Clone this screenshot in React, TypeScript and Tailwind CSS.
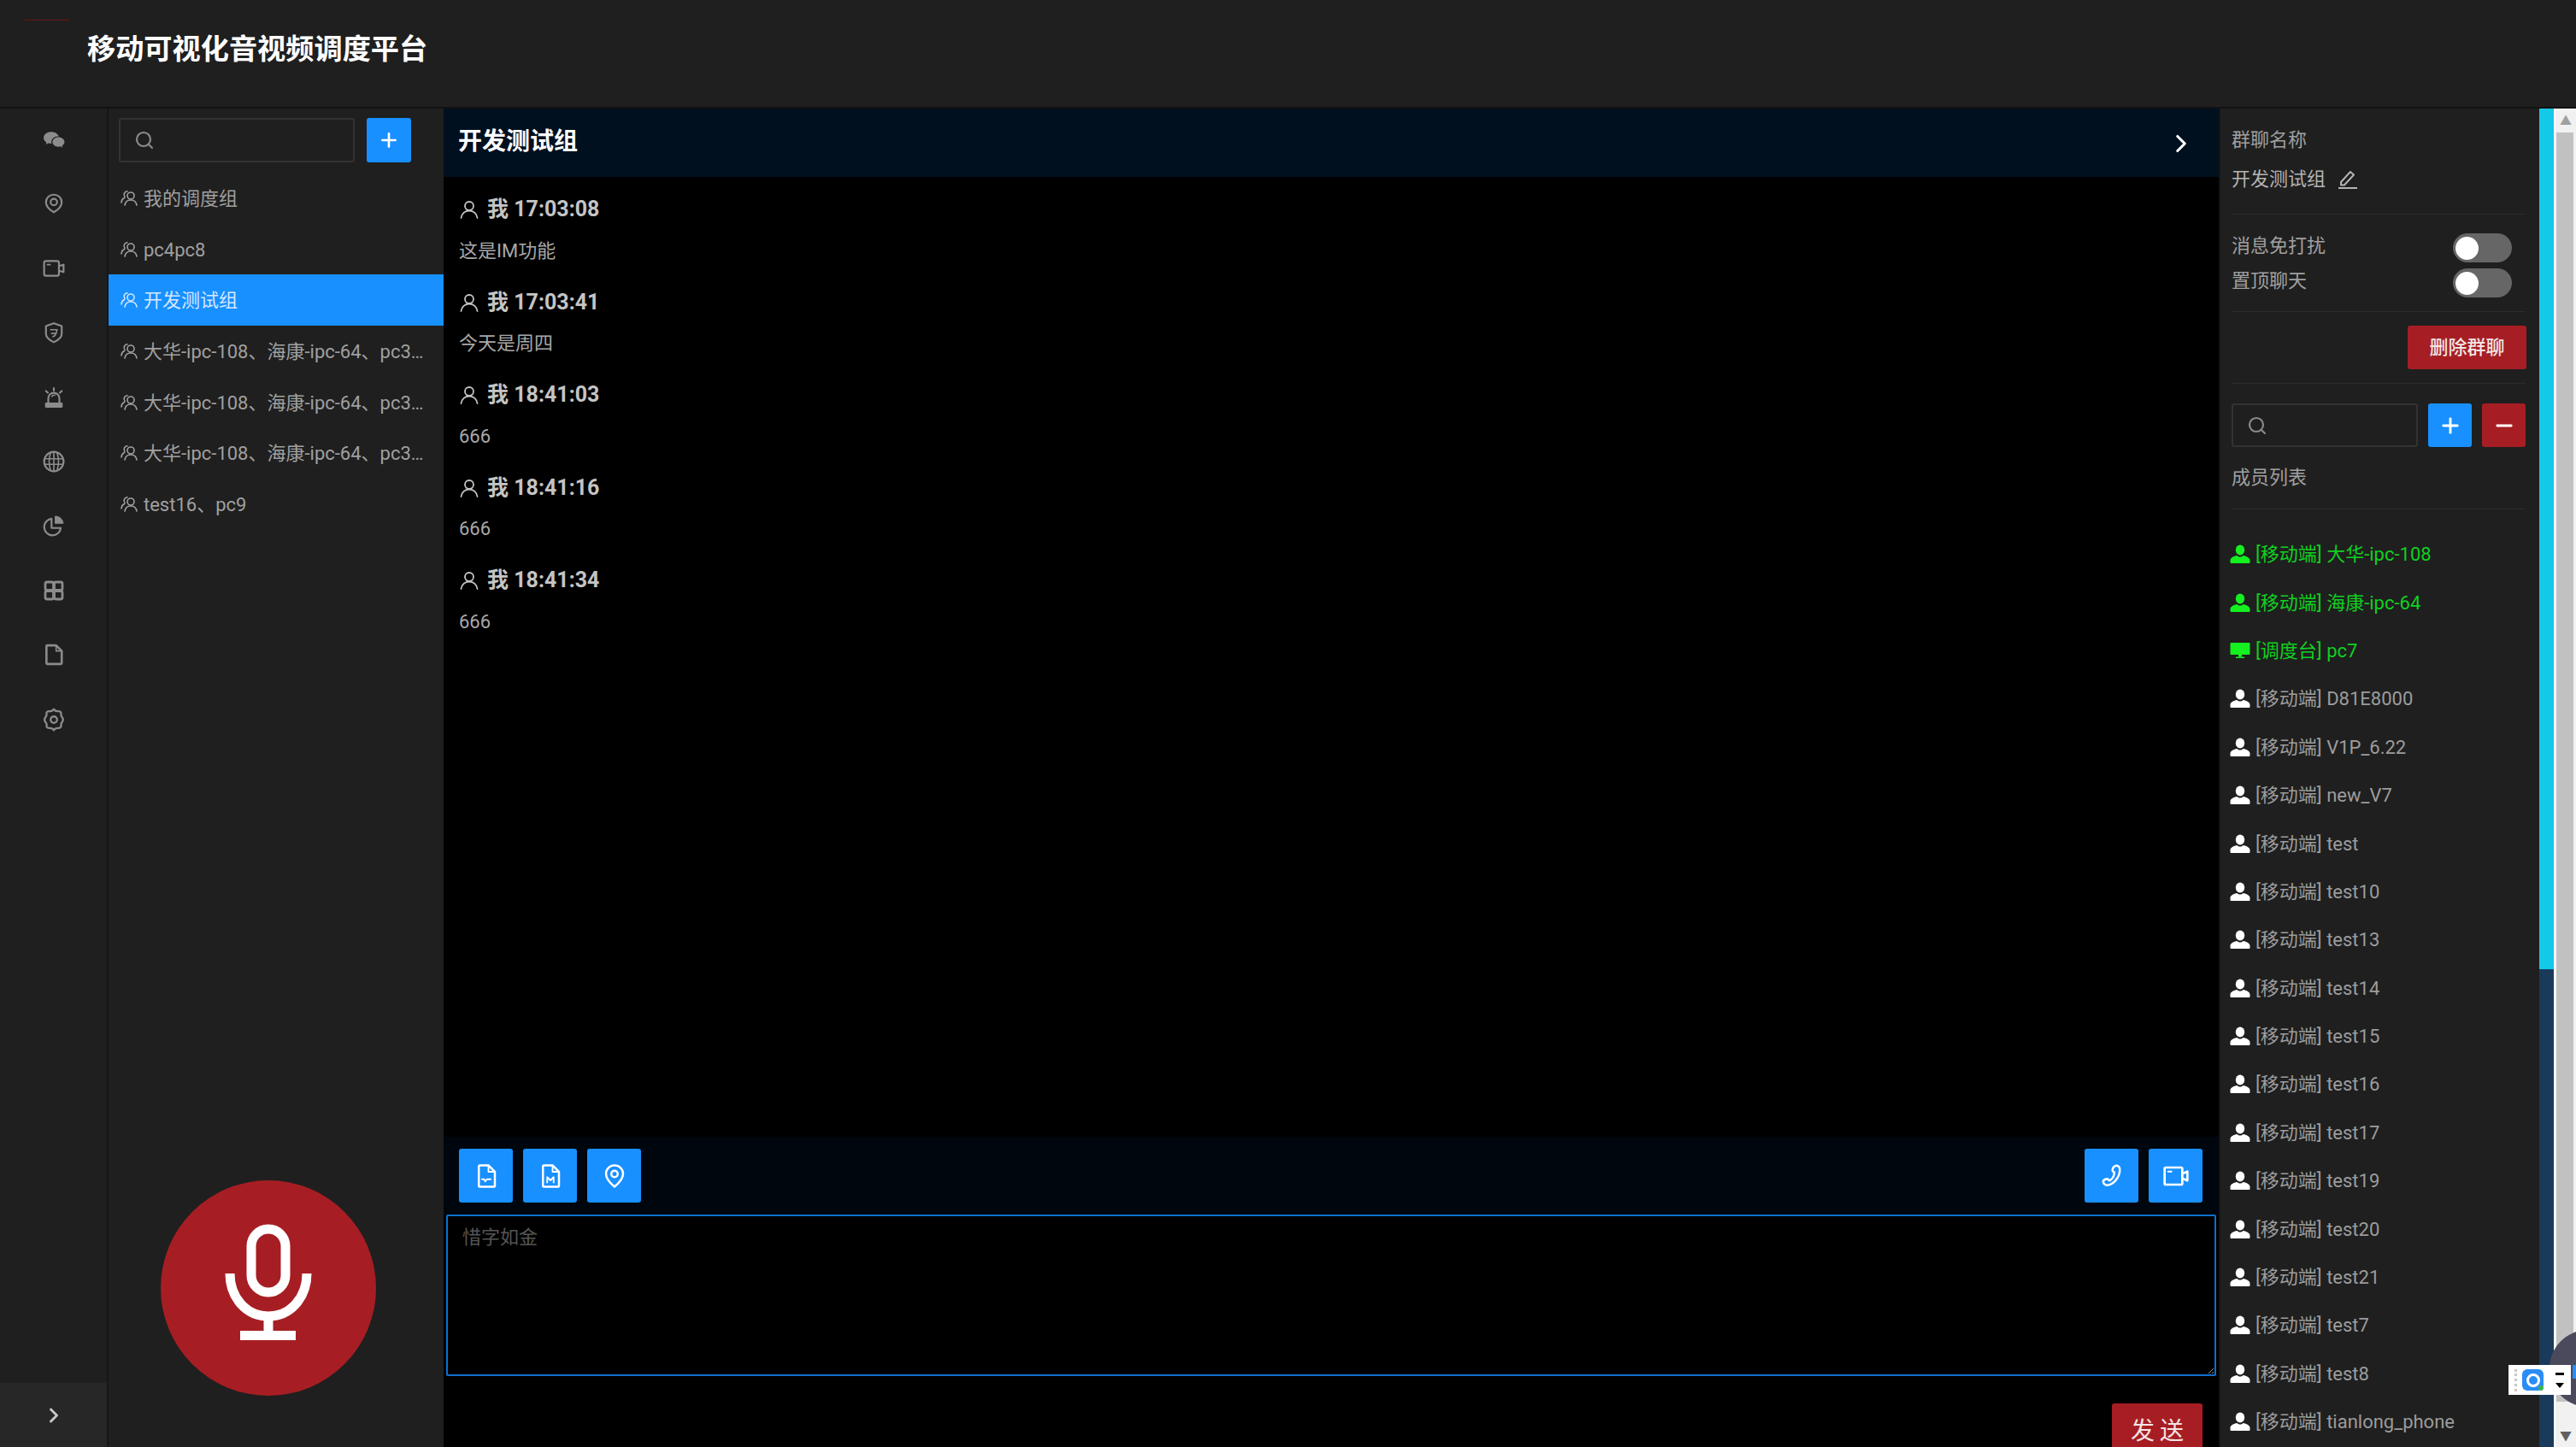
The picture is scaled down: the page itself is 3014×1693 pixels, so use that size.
import { ChevronRight, Minus, Plus, Search } from "lucide-react";

const groups = [
  "我的调度组",
  "pc4pc8",
  "开发测试组",
  "大华-ipc-108、海康-ipc-64、pc3、pc4、pc7",
  "大华-ipc-108、海康-ipc-64、pc3、pc5、pc8",
  "大华-ipc-108、海康-ipc-64、pc3、pc6、pc9",
  "test16、pc9",
];

const messages = [
  { time: "17:03:08", text: "这是IM功能" },
  { time: "17:03:41", text: "今天是周四" },
  { time: "18:41:03", text: "666" },
  { time: "18:41:16", text: "666" },
  { time: "18:41:34", text: "666" },
];

const members = [
  { tag: "移动端", name: "大华-ipc-108", online: true },
  { tag: "移动端", name: "海康-ipc-64", online: true },
  { tag: "调度台", name: "pc7", online: true, desk: true },
  { tag: "移动端", name: "D81E8000" },
  { tag: "移动端", name: "V1P_6.22" },
  { tag: "移动端", name: "new_V7" },
  { tag: "移动端", name: "test" },
  { tag: "移动端", name: "test10" },
  { tag: "移动端", name: "test13" },
  { tag: "移动端", name: "test14" },
  { tag: "移动端", name: "test15" },
  { tag: "移动端", name: "test16" },
  { tag: "移动端", name: "test17" },
  { tag: "移动端", name: "test19" },
  { tag: "移动端", name: "test20" },
  { tag: "移动端", name: "test21" },
  { tag: "移动端", name: "test7" },
  { tag: "移动端", name: "test8" },
  { tag: "移动端", name: "tianlong_phone" },
];

function Svg({ size = 26, children }: { size?: number; children: React.ReactNode }) {
  return (
    <svg width={size} height={size} viewBox="0 0 24 24" fill="none" stroke="currentColor" strokeWidth="2" strokeLinecap="round" strokeLinejoin="round">
      {children}
    </svg>
  );
}

const railIcons = [
  <Svg key="chat">
    <path fill="currentColor" stroke="none" d="M9 4c-4.400 0-8 2.800-8 6.300 0 2 1.200 3.700 3 4.900L3.300 17.600l2.800-1.400c.9.3 1.900.4 2.900.4h.6a5 5 0 0 1-.3-1.700c0-3.500 3.300-6.200 7.400-6.200h.6C16.300 6 13 4 9 4z" />
    <path fill="currentColor" stroke="none" d="M23.500 14.800c0-2.900-2.900-5.200-6.500-5.200s-6.500 2.300-6.500 5.200S13.400 20 17 20c.8 0 1.500-.1 2.200-.3l2.300 1.200-.6-2c1.600-1 2.600-2.500 2.600-4.100z" />
  </Svg>,
  <Svg key="pin">
    <path d="M12 2.500c-4.700 0-8.500 3.500-8.500 8 0 5 5 9 8.500 11 3.500-2 8.500-6 8.500-11 0-4.500-3.800-8-8.500-8z" />
    <circle cx="12" cy="10.500" r="3.500" />
  </Svg>,
  <Svg key="video">
    <rect x="1.500" y="4" width="16" height="16" rx="2" />
    <path d="M17.500 9.500 22.500 8v8l-5-1.500" />
    <path d="M5 8h3" strokeWidth="1.500" />
  </Svg>,
  <Svg key="shield">
    <path d="M12 2 3.500 5v8.500C3.500 17.500 8 20.500 12 22.500c4-2 8.500-5 8.500-9V5z" />
    <path d="M8.500 9h7l-1 4h-5M14 13c0 2-1 3-3 3.500" strokeWidth="1.500" />
  </Svg>,
  <Svg key="alarm">
    <path d="M6 18v-5a6 6 0 0 1 12 0v5" />
    <path fill="currentColor" d="M3.500 18.500h17V22h-17z" />
    <path d="M12 2v2.500M3.500 5l2 2M20.500 5l-2 2" />
    <path d="M10 11a3 3 0 0 1 3-1.500" strokeWidth="1.500" />
  </Svg>,
  <Svg key="globe">
    <circle cx="12" cy="12" r="10.500" />
    <path d="M8.500 2.500c-2 6-2 13 0 19M15.500 2.500c2 6 2 13 0 19M12 1.500v21M2 9h20M2 15h20" strokeWidth="1.500" />
  </Svg>,
  <Svg key="pie">
    <path d="M19.500 14.500A9 9 0 1 1 9.500 4.500V14.500z" />
    <path fill="currentColor" d="M13.500 2v7.500H22A8.500 8.500 0 0 0 13.500 2z" strokeWidth="1" />
  </Svg>,
  <Svg key="apps" size={24}>
    <rect x="2" y="2" width="9.500" height="9.500" rx="2" strokeWidth="2.800" />
    <rect x="12.500" y="2" width="9.500" height="9.500" rx="2" strokeWidth="2.800" />
    <rect x="2" y="12.500" width="9.500" height="9.500" rx="2" strokeWidth="2.800" />
    <rect x="12.500" y="12.500" width="9.500" height="9.500" rx="2" strokeWidth="2.800" />
  </Svg>,
  <Svg key="file">
    <path d="M4 3a1 1 0 0 1 1-1h9.500L20.500 8v13a1 1 0 0 1-1 1H5a1 1 0 0 1-1-1z" strokeWidth="2.400" />
    <path d="M14.500 2v6h6" strokeWidth="1.500" />
  </Svg>,
  <Svg key="gear" size={28}>
    <path d="M12 1.500c1 1.500 2 2 3.500 2.100 1.600 0 2.900-.3 3.500.9.700 1.200-.2 2.200.4 3.500.6 1.400 1.900 2.600 1.900 4s-1.300 2.600-1.900 4c-.6 1.300.3 2.300-.4 3.500-.6 1.200-1.900.9-3.500.9-1.500.1-2.500.6-3.500 2.100-1-1.500-2-2-3.500-2.100-1.600 0-2.900.3-3.500-.9-.7-1.200.2-2.200-.4-3.500C3.900 14.600 2.600 13.400 2.600 12s1.300-2.600 1.900-4c.6-1.300-.3-2.300.4-3.500.6-1.200 1.900-.9 3.500-.9 1.500-.1 2.500-.6 3.600-2.100z" />
    <circle cx="12" cy="12" r="3.200" />
  </Svg>,
];

function GroupIcon() {
  return (
    <svg width="20" height="20" viewBox="0 0 20 20" fill="none" stroke="currentColor" strokeWidth="1.600" strokeLinecap="round" strokeLinejoin="round">
      <circle cx="12" cy="7" r="4" />
      <path d="M5 18c.6-3.500 3.300-6 7-6s6.400 2.500 7 6" />
      <path d="M8 1.800A4 4 0 0 0 5 8.300M1 15c.2-2.600 1.500-4.600 3.500-5.500" />
    </svg>
  );
}

function PersonOutline() {
  return (
    <svg width="24" height="24" viewBox="0 0 24 24" fill="none" stroke="currentColor" strokeWidth="1.800" strokeLinecap="round">
      <circle cx="12" cy="8" r="5" />
      <path d="M2.500 22c.6-5 4.500-8.500 9.500-8.500s8.900 3.500 9.500 8.500" />
    </svg>
  );
}

function PersonFilled() {
  return (
    <svg width="24" height="24" viewBox="0 0 24 24" fill="currentColor">
      <ellipse cx="12" cy="7.500" rx="5.200" ry="6" />
      <path d="M8.500 14c-4 .8-8 2.600-8 5.500V22a1 1 0 0 0 1 1h21a1 1 0 0 0 1-1v-2.500c0-2.900-4-4.700-8-5.500-1 1-2.300 1.600-3.500 1.600S9.500 15 8.500 14z" />
    </svg>
  );
}

function DeskIcon() {
  return (
    <svg width="24" height="24" viewBox="0 0 24 24" fill="currentColor">
      <rect x="0.500" y="3" width="23" height="14" rx="1" />
      <rect x="10" y="17" width="4" height="2.500" />
      <rect x="7" y="19.500" width="10" height="1.500" />
    </svg>
  );
}

function SearchBox({ className }: { className: string }) {
  return (
    <div className={`flex items-center rounded-[3px] border-2 border-[#333333] pl-[16px] ${className}`}>
      <Search size={24} strokeWidth={2.200} className="text-[#8a8a8a]" />
    </div>
  );
}

function Square({ className, children }: { className: string; children: React.ReactNode }) {
  return <div className={`flex items-center justify-center rounded-[3px] text-white ${className}`}>{children}</div>;
}

function ToolButton({ children }: { children: React.ReactNode }) {
  return <Square className="h-[63px] w-[63px] bg-[#1890ff] text-[#cfe6ff]">{children}</Square>;
}

function Toggle() {
  return (
    <div className="flex h-[34px] w-[69px] items-center rounded-full bg-[#666666] pl-[3px]">
      <div className="h-[27px] w-[27px] rounded-full bg-white" />
    </div>
  );
}

export default function App() {
  return (
    <div className="relative flex h-[1693px] w-[3014px] flex-col overflow-hidden bg-black font-['Roboto','Noto_Sans_CJK_SC',sans-serif] text-[22px] text-[#a0a0a0] blur-[0.7px]">
      <header className="h-[127px] shrink-0 border-b-2 border-[#121212] bg-[#1f1f1f] pt-[23px]">
        <div className="ml-[29px] h-px w-[52px] bg-[#6b1414]" />
        <h1 className="mt-[12px] ml-[102px] text-[33.200px] leading-[44px] font-bold text-white">移动可视化音视频调度平台</h1>
      </header>

      <div className="flex min-h-0 flex-1">
        <nav className="flex w-[127px] shrink-0 flex-col border-r-2 border-[#161616] bg-[#1f1f1f] text-[#8c8c8c]">
          <div className="flex flex-1 flex-col gap-[3.400px]">
            {railIcons.map((icon) => (
              <div key={icon.key} className="flex h-[72px] items-center justify-center">
                {icon}
              </div>
            ))}
          </div>
          <div className="flex h-[75px] items-center justify-center bg-[#272727] text-[#c8c8c8]">
            <ChevronRight size={28} strokeWidth={2.500} />
          </div>
        </nav>

        <aside className="w-[392px] shrink-0 bg-[#1f1f1f]">
          <div className="mt-[11px] flex gap-[14px] pl-[12px]">
            <SearchBox className="h-[52px] w-[276px]" />
            <Square className="h-[52px] w-[52px] bg-[#1890ff]">
              <Plus size={26} strokeWidth={2.500} />
            </Square>
          </div>
          <ul className="mt-[12px]">
            {groups.map((g, i) => (
              <li key={g} className={`flex h-[59.700px] items-center gap-[7px] pr-[17px] pl-[14px] ${i === 2 ? "bg-[#1890ff] text-[#d3e8ff]" : ""}`}>
                <span className="shrink-0">
                  <GroupIcon />
                </span>
                <span className="truncate pt-[1px]">{g}</span>
              </li>
            ))}
          </ul>
        </aside>

        <main className="flex min-w-0 flex-1 flex-col overflow-hidden bg-black">
          <div className="flex h-[80px] shrink-0 items-center justify-between bg-[#00101f] pr-[27px] pl-[17px] text-white">
            <span className="pb-[2px] text-[28px] font-bold">开发测试组</span>
            <span className="pt-[2px]">
              <ChevronRight size={34} strokeWidth={2.200} />
            </span>
          </div>

          <div className="flex h-[1123px] shrink-0 flex-col gap-[14.500px] pt-[15px] pl-[18px]">
            {messages.map((m) => (
              <div key={m.time} className="flex flex-col gap-[2px]">
                <div className="flex h-[46px] items-center gap-[9px] text-[25px] font-bold text-[#c4c4c4]">
                  <PersonOutline />
                  <span>我 {m.time}</span>
                </div>
                <div className="flex h-[46px] items-center text-[#a8a8a8]">{m.text}</div>
              </div>
            ))}
          </div>

          <div className="flex h-[91px] shrink-0 items-center justify-between bg-[#00060d] pr-[19px] pl-[18px]">
            <div className="flex gap-[12px]">
              <ToolButton>
                <Svg size={30}>
                  <path d="M5 3a1 1 0 0 1 1-1h8l6 6v13a1 1 0 0 1-1 1H6a1 1 0 0 1-1-1z" />
                  <path d="M14 2v6h6" strokeWidth="1.500" />
                  <path d="M8 15h2l1 2 1.500-2H16" strokeWidth="1.500" />
                </Svg>
              </ToolButton>
              <ToolButton>
                <Svg size={30}>
                  <path d="M5 3a1 1 0 0 1 1-1h8l6 6v13a1 1 0 0 1-1 1H6a1 1 0 0 1-1-1z" />
                  <path d="M14 2v6h6" strokeWidth="1.500" />
                  <path d="M9 18v-5l3 3 3-3v5" strokeWidth="1.500" />
                </Svg>
              </ToolButton>
              <ToolButton>
                <Svg size={30}>
                  <path d="M12 2c-4.400 0-8 3.400-8 7.800 0 5 5 9.700 8 12.200 3-2.500 8-7.200 8-12.200C20 5.400 16.400 2 12 2z" />
                  <circle cx="12" cy="10" r="3" />
                </Svg>
              </ToolButton>
            </div>
            <div className="flex gap-[12px]">
              <ToolButton>
                <Svg size={30}>
                  <path d="M15 2.500c2-.8 4 .5 4.300 2.500.8 6-4 14-10.800 15.500-1.700.4-4-.6-4.500-2.500-.4-1.300.6-2.500 1.800-3 1.300-.5 2.700-.3 3.300.8.200.4.600.5 1 .3 2.400-1.500 4-4.500 4.200-7.300 0-.4-.3-.7-.7-.8-1.600-.5-1.500-4.700 1.900-5.500z" />
                </Svg>
              </ToolButton>
              <ToolButton>
                <Svg size={32}>
                  <rect x="2" y="4.500" width="15.500" height="15" rx="1" />
                  <path d="M17.500 10 22 8v8l-4.500-2" />
                  <path d="M5 8h3" strokeWidth="1.500" />
                </Svg>
              </ToolButton>
            </div>
          </div>

          <textarea
            autoFocus
            placeholder="惜字如金"
            className="mx-[3px] h-[189px] shrink-0 rounded-[2px] border-2 border-[#0d70cc] bg-black px-[17px] py-[8px] text-[22px] caret-[#888888] outline-none placeholder:text-[#555555]"
          />

          <div className="mt-[32px] flex shrink-0 justify-end pr-[19px]">
            <button className="h-[66px] w-[106px] shrink-0 rounded-[3px] bg-[#a61e23] pl-[6px] text-[28px] tracking-[6px] text-[#f4e4e4]">发送</button>
          </div>
        </main>

        <aside className="flex w-[375px] shrink-0 flex-col border-l-2 border-[#141414] bg-[#1f1f1f] pr-[16px] pl-[13px]">
          <div className="mt-[16px] flex h-[40px] items-center">群聊名称</div>
          <div className="mt-[6px] flex h-[40px] items-center gap-[14px] text-[#b4b4b4]">
            开发测试组
            <svg width="24" height="24" viewBox="0 0 24 24" fill="none" stroke="currentColor" strokeWidth="2">
              <path d="m4 16 11-12 4 3.500L8 19.500H4z" strokeLinejoin="round" />
              <path d="M1 23h22" />
            </svg>
          </div>
          <div className="mt-[21px] h-px bg-[#2c2c2c]" />
          <div className="mt-[22px] flex h-[34px] items-center justify-between pr-[16px]">
            <span className="mb-[6px]">消息免打扰</span>
            <Toggle />
          </div>
          <div className="mt-[7px] flex h-[34px] items-center justify-between pr-[16px]">
            <span className="mb-[6px]">置顶聊天</span>
            <Toggle />
          </div>
          <div className="mt-[16px] h-px bg-[#2c2c2c]" />
          <div className="mt-[16px] -mr-[1px] flex justify-end">
            <button className="h-[51px] w-[139px] rounded-[3px] bg-[#a61e23] text-[22px] font-medium text-[#f2e6e6]">删除群聊</button>
          </div>
          <div className="mt-[16px] h-px bg-[#2c2c2c]" />
          <div className="mt-[23px] flex items-center gap-[12px]">
            <SearchBox className="h-[51px] w-[218px]" />
            <Square className="h-[51px] w-[51px] bg-[#1890ff]">
              <Plus size={28} strokeWidth={2.500} />
            </Square>
            <Square className="h-[51px] w-[51px] bg-[#a61e23]">
              <Minus size={28} strokeWidth={2.500} />
            </Square>
          </div>
          <div className="mt-[15px] flex h-[40px] items-center">成员列表</div>
          <div className="mt-[17px] h-px bg-[#2c2c2c]" />
          <ul className="pt-[24px]">
            {members.map((m) => (
              <li key={m.name} className={`-ml-[2px] flex h-[56.400px] items-center gap-[6px] whitespace-nowrap ${m.online ? "text-[#10d020]" : "text-[#9c9c9c]"}`}>
                <span className={m.online ? "text-[#14f020]" : "text-white"}>{m.desk ? <DeskIcon /> : <PersonFilled />}</span>
                <span className="pt-[1px]">
                  [{m.tag}] {m.name}
                </span>
              </li>
            ))}
          </ul>
        </aside>

        <div className="flex w-[17px] shrink-0 flex-col">
          <div className="h-[1007px] bg-[#14c8e8]" />
          <div className="flex-1 bg-[#1a3a5c]" />
        </div>

        <div className="flex w-[26px] shrink-0 flex-col items-center border-l-2 border-white bg-[#f1f1f1]">
          <div className="flex h-[28px] w-full items-center justify-center text-[14px] text-[#a0a0a0]">▲</div>
          <div className="ml-[-3px] h-[1485px] w-[20px] bg-[#c1c1c1]" />
          <div className="mt-[30px] text-[14px] text-[#606060]">▼</div>
        </div>
      </div>

      {/* voice talk button floats over the group list */}
      <div className="absolute top-[1381px] left-[188px] h-[252px] w-[252px] rounded-full bg-[#a61e23]">
        <svg width="252" height="252" viewBox="0 0 252 252" fill="none" stroke="white" strokeWidth="11">
          <rect x="106" y="57" width="40" height="74" rx="20" />
          <path d="M81 109c0 28 19 50 45 50s45-22 45-50" />
          <path d="M126 159v20" />
          <rect x="93" y="176" width="65" height="11" fill="white" stroke="none" />
        </svg>
      </div>

      {/* screen recorder widget over the scrollbar */}
      <div className="absolute top-[1556px] left-[2983px] h-[90px] w-[90px] rounded-full bg-[#4a4a5c]" />
      <div className="absolute top-[1597px] left-[3010px] h-[16px] w-[4px] bg-[#2a8cf5]" />
      <div className="absolute top-[1597px] left-[2935px] flex h-[35px] w-[73px] items-center justify-between bg-white pr-[8px] pl-[7px]">
        <div className="h-[26px] w-[3px] border-l-[3px] border-dotted border-[#c8c8c8]" />
        <div className="relative ml-[6px] flex h-[25px] w-[25px] items-center justify-center rounded-[6px] bg-[#2a8cf5]">
          <div className="h-[16px] w-[16px] rounded-full border-[3px] border-white" />
          <div className="absolute right-0 bottom-0 h-[6px] w-[6px] rounded-full bg-[#3cb44a]" />
        </div>
        <div className="ml-auto flex h-[18px] w-[10px] flex-col items-center justify-between">
          <div className="h-[3px] w-[10px] bg-black" />
          <div className="h-0 w-0 border-x-[5px] border-t-[6px] border-x-transparent border-t-black" />
        </div>
      </div>
    </div>
  );
}
